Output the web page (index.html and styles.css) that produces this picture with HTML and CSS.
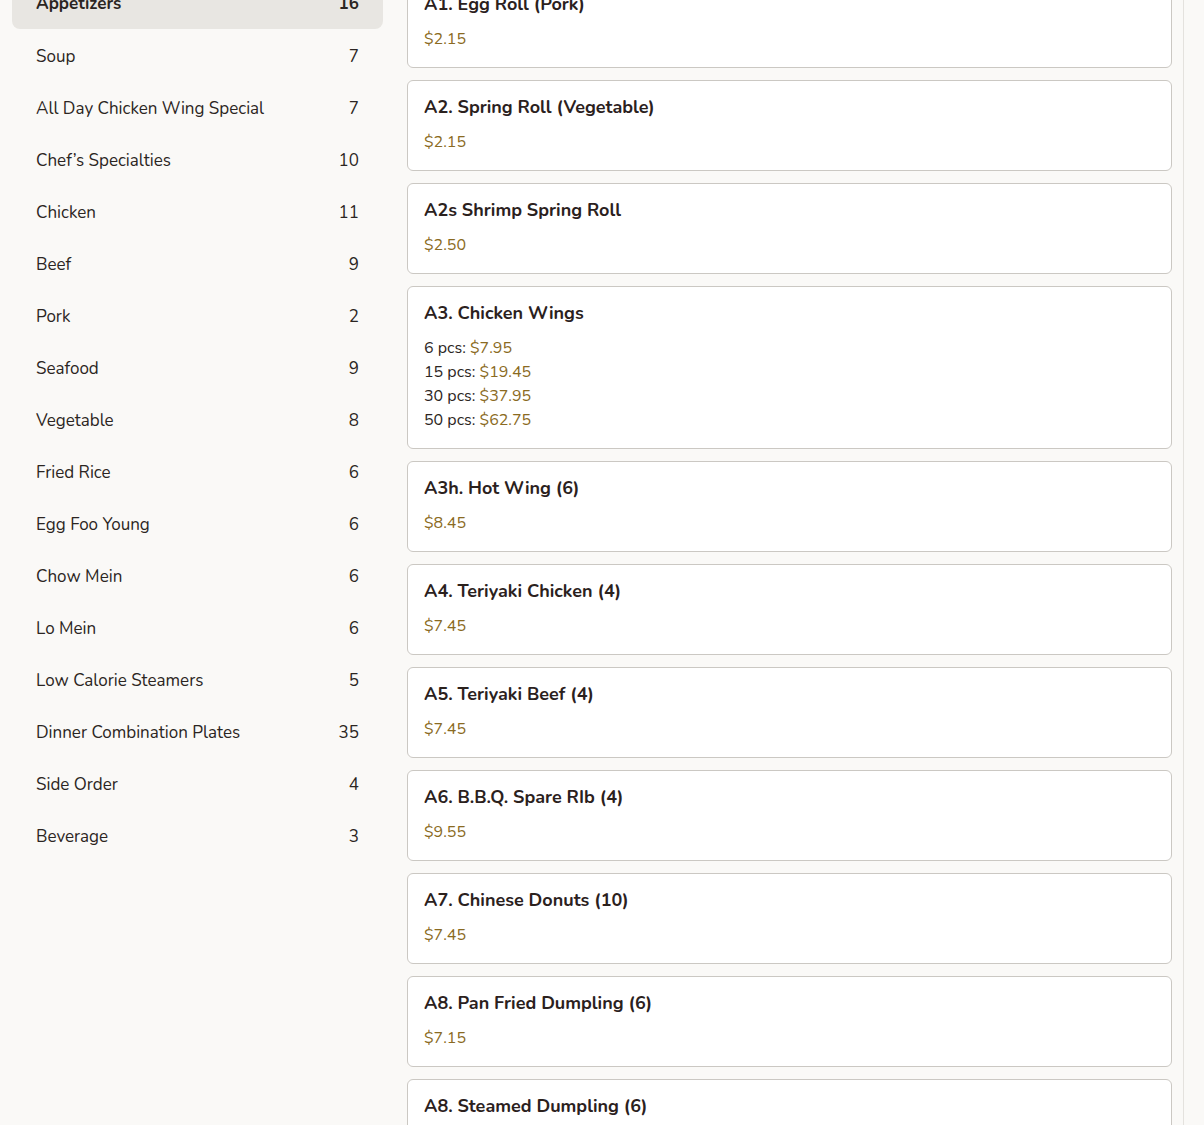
FILE: index.html
```html
<!DOCTYPE html>
<html lang="en">
<head>
    <meta charset="UTF-8">
    <meta name="viewport" content="width=device-width, initial-scale=1.0">
    <title>Menu</title>
    <link rel="stylesheet" href="styles.css">
</head>
<body>
    <div class="page">
        <div class="layout">
            <!-- Category list -->
            <nav class="categories">
                <div class="category active"><span>Appetizers</span><span class="count">16</span></div>
                <div class="category"><span>Soup</span><span class="count">7</span></div>
                <div class="category"><span>All Day Chicken Wing Special</span><span class="count">7</span></div>
                <div class="category"><span>Chef’s Specialties</span><span class="count">10</span></div>
                <div class="category"><span>Chicken</span><span class="count">11</span></div>
                <div class="category"><span>Beef</span><span class="count">9</span></div>
                <div class="category"><span>Pork</span><span class="count">2</span></div>
                <div class="category"><span>Seafood</span><span class="count">9</span></div>
                <div class="category"><span>Vegetable</span><span class="count">8</span></div>
                <div class="category"><span>Fried Rice</span><span class="count">6</span></div>
                <div class="category"><span>Egg Foo Young</span><span class="count">6</span></div>
                <div class="category"><span>Chow Mein</span><span class="count">6</span></div>
                <div class="category"><span>Lo Mein</span><span class="count">6</span></div>
                <div class="category"><span>Low Calorie Steamers</span><span class="count">5</span></div>
                <div class="category"><span>Dinner Combination Plates</span><span class="count">35</span></div>
                <div class="category"><span>Side Order</span><span class="count">4</span></div>
                <div class="category"><span>Beverage</span><span class="count">3</span></div>
            </nav>

            <!-- Items -->
            <main class="items">
                <div class="item">
                    <div class="item-name">A1. Egg Roll (Pork)</div>
                    <div class="price">$2.15</div>
                </div>
                <div class="item">
                    <div class="item-name">A2. Spring Roll (Vegetable)</div>
                    <div class="price">$2.15</div>
                </div>
                <div class="item">
                    <div class="item-name">A2s Shrimp Spring Roll</div>
                    <div class="price">$2.50</div>
                </div>
                <div class="item">
                    <div class="item-name">A3. Chicken Wings</div>
                    <div class="option">6 pcs: <span class="price">$7.95</span></div>
                    <div class="option">15 pcs: <span class="price">$19.45</span></div>
                    <div class="option">30 pcs: <span class="price">$37.95</span></div>
                    <div class="option">50 pcs: <span class="price">$62.75</span></div>
                </div>
                <div class="item">
                    <div class="item-name">A3h. Hot Wing (6)</div>
                    <div class="price">$8.45</div>
                </div>
                <div class="item">
                    <div class="item-name">A4. Teriyaki Chicken (4)</div>
                    <div class="price">$7.45</div>
                </div>
                <div class="item">
                    <div class="item-name">A5. Teriyaki Beef (4)</div>
                    <div class="price">$7.45</div>
                </div>
                <div class="item">
                    <div class="item-name">A6. B.B.Q. Spare RIb (4)</div>
                    <div class="price">$9.55</div>
                </div>
                <div class="item">
                    <div class="item-name">A7. Chinese Donuts (10)</div>
                    <div class="price">$7.45</div>
                </div>
                <div class="item">
                    <div class="item-name">A8. Pan Fried Dumpling (6)</div>
                    <div class="price">$7.15</div>
                </div>
                <div class="item">
                    <div class="item-name">A8. Steamed Dumpling (6)</div>
                    <div class="price">$7.15</div>
                </div>
            </main>
        </div>
    </div>
</body>
</html>
```

FILE: styles.css
```css
html, body {
    height: 100%;
}

body {
    margin: 0;
    background-color: #faf9f7;
    color: #2b2522;
    font-family: "Nunito", Lato, "Open Sans", sans-serif;
    overflow: hidden;
}

.page {
    width: 1183px;
    height: 100%;
    border-right: 1px solid #e4e2de;
    overflow: hidden;
}

/* scrolled view: the list starts a little above the window */
.layout {
    display: flex;
    align-items: flex-start;
    gap: 24px;
    padding: 0 11px 0 12px;
    margin-top: -23px;
}

.categories {
    width: 371px;
    flex-shrink: 0;
    padding-top: 1px;
}

.category {
    display: flex;
    justify-content: space-between;
    align-items: center;
    height: 52px;
    padding: 0 24px;
    font-size: 17px;
    color: #2b2522;
    border-radius: 8px;
}

.category.active {
    background-color: #e8e6e2;
    font-weight: bold;
    height: 51px;
    margin-bottom: 1px;
}

.items {
    flex: 1;
    min-width: 0;
}

.item {
    background-color: #ffffff;
    border: 1px solid #cbc8c3;
    border-radius: 6px;
    padding: 16px;
    margin-bottom: 12px;
}

.item-name {
    font-size: 18px;
    font-weight: bold;
    line-height: 20px;
    margin-bottom: 13px;
    color: #2b211d;
}

.price {
    color: #8a6a22;
    font-size: 16px;
    line-height: 24px;
}

.option {
    font-size: 16px;
    line-height: 24px;
    color: #2b2522;
}
```
